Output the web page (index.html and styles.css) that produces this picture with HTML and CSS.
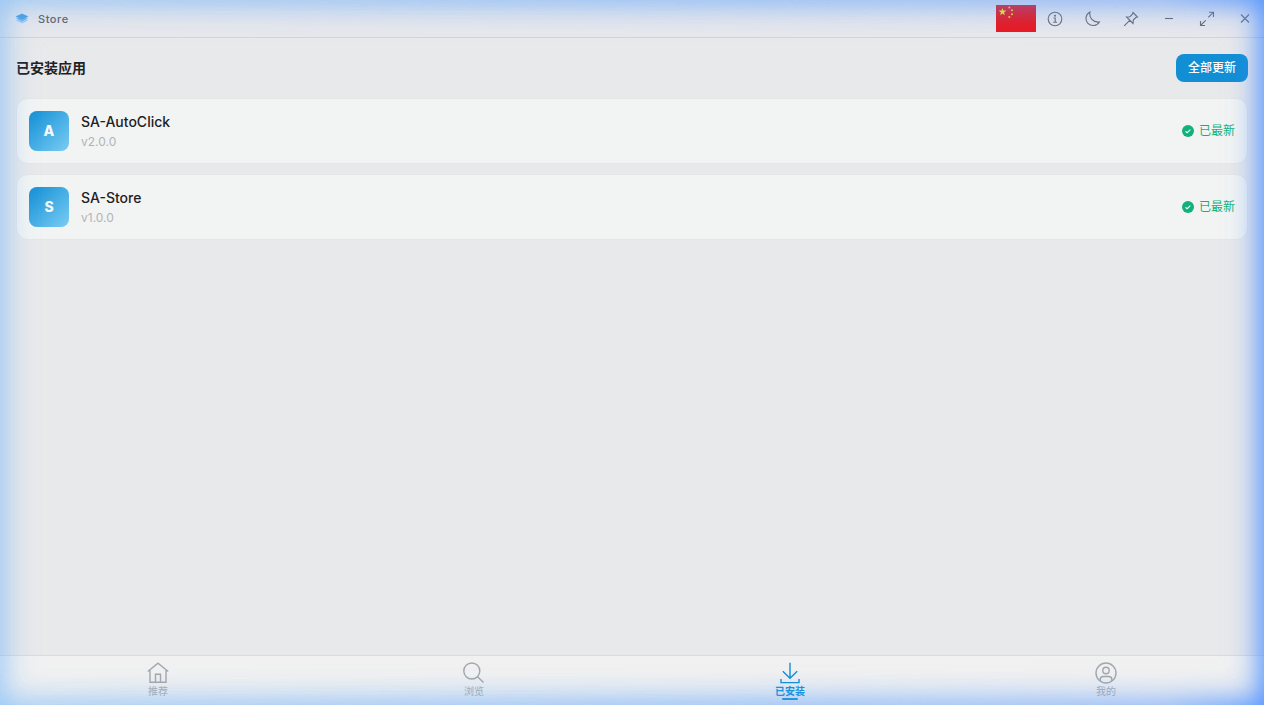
FILE: index.html
```html
<!DOCTYPE html>
<html lang="zh-CN">
<head>
<meta charset="utf-8">
<meta name="viewport" content="width=device-width, initial-scale=1">
<title>Store</title>
<link rel="stylesheet" href="styles.css">
</head>
<body>
<div class="app">
  <header class="titlebar">
    <svg class="logo" viewBox="0 0 14 14" aria-hidden="true">
      <path d="M1 8.500 7 6l6 2.500L7 11.500z" fill="#a9cff0"/>
      <path d="M1 6.500 7 4l6 2.500L7 9.500z" fill="#79b5e8"/>
      <path d="M.5 4.500 7 1.500l6.500 3L7 7.500z" fill="#4f9fe0"/>
    </svg>
    <span class="brand">Store</span>
    <div class="tools">
      <button class="flag" aria-label="语言">
        <svg viewBox="0 0 40 27" aria-hidden="true">
          <path fill="#e91a22" d="M0 0h40v27H0z"/>
          <path fill="#f5f01c" d="m6.500 3 .9 2.600h2.900L8 7.400l.9 2.900-2.400-1.700L4.100 10.300 5 7.400 2.700 5.600h2.900z"/>
          <g fill="#f5dd20"><circle cx="13.300" cy="2.600" r="1"/><circle cx="16" cy="5.200" r="1"/><circle cx="16" cy="9.200" r="1"/><circle cx="13.300" cy="12" r="1"/></g>
        </svg>
      </button>
      <button class="tool" aria-label="信息"><svg viewBox="0 0 16 16"><circle cx="8" cy="8" r="6.800"/><path d="M6.500 7h1.700v4M6.200 11.200h3.800"/><circle cx="8" cy="4.700" r=".5"/></svg></button>
      <button class="tool" aria-label="深色模式"><svg viewBox="0 0 16 16"><path d="M5 .9C3.800 6.700 8 11.800 14.400 11A7.200 7.200 0 1 1 5 .9z"/></svg></button>
      <button class="tool" aria-label="置顶"><svg viewBox="0 0 16 16"><path d="m10 1.500 4.500 4.500-1.700.6-2.500 2.500-.3 3.400L3.500 6l3.400-.3 2.500-2.500zM6.700 9.300 1.200 14.800"/></svg></button>
      <button class="tool" aria-label="最小化"><svg viewBox="0 0 16 16"><path d="M4 7.500h8"/></svg></button>
      <button class="tool" aria-label="最大化"><svg viewBox="0 0 16 16"><path d="M10 1.200h4.500V6M14.500 1.200 9.300 6.400M6 14.500H1.500V10M1.500 14.500l5.200-5.200"/></svg></button>
      <button class="tool" aria-label="关闭"><svg viewBox="0 0 16 16"><path d="m4 3.500 8 8M12 3.500l-8 8"/></svg></button>
    </div>
  </header>

  <main class="content">
    <div class="heading">
      <h1 class="title">已安装应用</h1>
      <button class="update">全部更新</button>
    </div>
    <ul class="list">
      <li class="card">
        <div class="avatar">A</div>
        <div class="info"><h2 class="name">SA-AutoClick</h2><p class="version">v2.0.0</p></div>
        <div class="status"><svg viewBox="0 0 12 12" aria-hidden="true"><circle cx="6" cy="6" r="6"/><path d="m3.500 6.300 1.600 1.400 3.300-3"/></svg><span>已最新</span></div>
      </li>
      <li class="card">
        <div class="avatar">S</div>
        <div class="info"><h2 class="name">SA-Store</h2><p class="version">v1.0.0</p></div>
        <div class="status"><svg viewBox="0 0 12 12" aria-hidden="true"><circle cx="6" cy="6" r="6"/><path d="m3.500 6.300 1.600 1.400 3.300-3"/></svg><span>已最新</span></div>
      </li>
    </ul>
  </main>

  <nav class="tabs">
    <a class="tab" href="#"><svg viewBox="0 0 22 22"><path d="M.8 9.500 11 1.200l10.200 8.300M3 8v12.300h16V8M8.500 20.300v-8h5v8"/></svg><span>推荐</span></a>
    <a class="tab" href="#"><svg viewBox="0 0 22 22"><circle cx="8.800" cy="9" r="8"/><path d="m14.600 14.700 5.900 5.800"/></svg><span>浏览</span></a>
    <a class="tab tab-active" href="#" aria-current="page"><svg viewBox="0 0 22 22"><path d="M11 .8v15M3.800 9.300 11 16.200l7.200-6.900M2 17v3.600h18V17"/></svg><span>已安装</span></a>
    <a class="tab" href="#"><svg viewBox="0 0 22 22"><circle cx="11" cy="11" r="10"/><circle cx="11" cy="8.500" r="3.200"/><path d="M5.200 19v-1.500a3 3 0 0 1 3-3h5.600a3 3 0 0 1 3 3V19"/></svg><span>我的</span></a>
  </nav>
</div>
<div class="glow glow-left" aria-hidden="true"></div>
<div class="glow glow-right" aria-hidden="true"></div>
</body>
</html>
```

FILE: styles.css
```css
* { box-sizing: border-box; }

body {
  margin: 0;
  font-family: Inter, "Noto Sans CJK SC", sans-serif;
  color: #1f2123;
  background: #e8e9eb;
}

h1, h2, p, ul { margin: 0; padding: 0; }

button {
  border: 0;
  padding: 0;
  font: inherit;
  background: none;
  cursor: pointer;
}

.app {
  min-height: 100vh;
  display: flex;
  flex-direction: column;
}

.titlebar {
  height: 38px;
  padding-left: 15px;
  display: flex;
  align-items: center;
  background: #e8e8ec;
  border-bottom: 1px solid #d2d4d8;
}

.logo { width: 14px; height: 14px; margin-right: 9px; }

.brand {
  font-size: 11px;
  font-weight: 500;
  letter-spacing: 0.05em;
  color: #626569;
}

.tools { margin-left: auto; display: flex; align-items: center; }

.flag { width: 40px; height: 27px; }
.flag svg { display: block; width: 100%; height: 100%; }

.tool {
  width: 38px;
  height: 36px;
  display: grid;
  place-items: center;
}

.tool svg {
  width: 16px;
  height: 16px;
  fill: none;
  stroke: #6b6e78;
  stroke-width: 1.1;
}

.content { flex: 1; padding: 16px; }

.heading {
  display: flex;
  align-items: center;
  justify-content: space-between;
  margin-bottom: 16px;
}

.title { font-size: 14px; line-height: 20px; font-weight: 600; }

.update {
  height: 28px;
  padding: 0 12px 3px;
  border-radius: 8px;
  font-size: 12px;
  font-weight: 500;
  color: #fff;
  background: #128fd4;
}

.list { list-style: none; display: grid; gap: 10px; }

.card {
  display: flex;
  align-items: center;
  gap: 12px;
  padding: 12px;
  border: 1px solid #e5e6e7;
  border-radius: 12px;
  background: #f2f4f3;
}

.avatar {
  width: 40px;
  height: 40px;
  border-radius: 8px;
  display: grid;
  place-items: center;
  font-size: 14px;
  line-height: 16px;
  font-weight: 800;
  color: #f3f9fc;
  background: linear-gradient(135deg, #128fd4, #7accf4);
}

.info { flex: 1; }
.name { font-size: 14px; line-height: 22px; font-weight: 500; }
.version { font-size: 12px; line-height: 18px; color: #b1b3b4; }

.status {
  display: flex;
  align-items: center;
  gap: 5px;
  font-size: 12px;
  line-height: 16px;
  color: #10b17a;
}

.status svg { width: 12px; height: 12px; fill: #10b17a; }
.status path { fill: none; stroke: #fff; stroke-width: 1.1; }

.tabs {
  height: 50px;
  display: flex;
  background: #f1f1f1;
  border-top: 1px solid #dadbdd;
}

.tab {
  flex: 1;
  display: flex;
  flex-direction: column;
  align-items: center;
  padding-top: 6px;
  font-size: 10px;
  line-height: 14px;
  color: #adafb1;
  text-decoration: none;
}

.tab svg {
  width: 22px;
  height: 22px;
  fill: none;
  stroke: #a5a7a9;
  stroke-width: 1.4;
}

.tab-active { color: #128fd4; font-weight: 600; }
.tab-active svg { stroke: #128fd4; }

.tab-active::after {
  content: "";
  width: 16px;
  height: 2px;
  border-radius: 1px;
  background: #128fd4;
}

.glow {
  position: fixed;
  inset: 0;
  pointer-events: none;
}

.glow-left {
  box-shadow:
    inset 0 0 24px 2px rgba(100, 174, 250, .4),
    inset 0 0 36px 2px rgba(100, 174, 250, .4);
  mask-image: linear-gradient(90deg, #000, rgba(0, 0, 0, .8) 60%, transparent);
}

.glow-right {
  box-shadow:
    inset 0 0 24px 2px rgba(70, 140, 255, .75),
    inset 0 0 36px 2px rgba(70, 140, 255, .65);
  mask-image: linear-gradient(90deg, transparent, rgba(0, 0, 0, .3) 60%, rgba(0, 0, 0, .6) 92%, #000);
}
```
